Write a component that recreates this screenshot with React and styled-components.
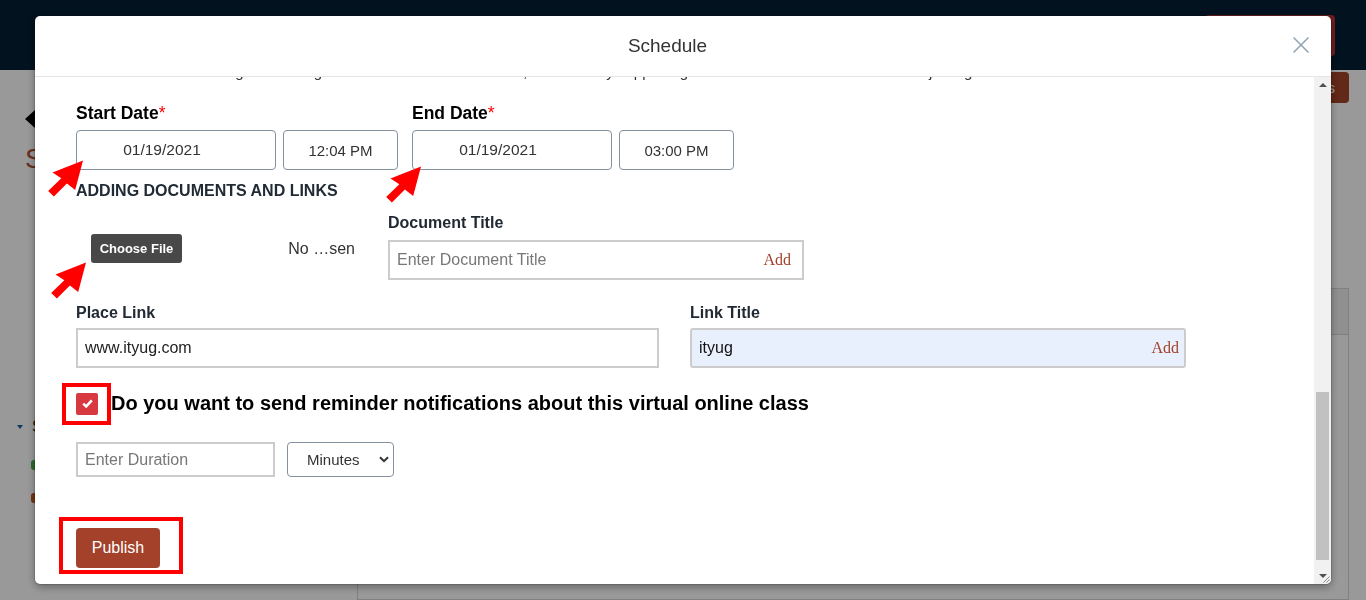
import React from "react";
import styled, { createGlobalStyle } from "styled-components";

const GlobalStyle = createGlobalStyle`
  * { box-sizing: border-box; }
  html, body { margin: 0; height: 100%; }
  body {
    font-family: "Liberation Sans", Arial, sans-serif;
    background: #fff;
    overflow: hidden;
  }
  input, button, select, textarea { font-family: inherit; }
`;

/* ---------- page behind the dialog ---------- */
const Page = styled.div`
  height: 600px;
  display: flex;
  flex-direction: column;
  background: #fff;
  color: #333;
`;
const TopBar = styled.header`
  height: 70px;
  flex-shrink: 0;
  background: #051e34;
  display: flex;
  align-items: center;
  justify-content: flex-end;
  padding-right: 31px;
`;
const TopButton = styled.button`
  width: 130px;
  height: 41px;
  border: 0;
  border-radius: 4px;
  background: #b83232;
  color: #fff;
  font-size: 15px;
`;
const Workspace = styled.div`
  flex: 1;
  display: flex;
  min-height: 0;
`;
const Sidebar = styled.aside`
  width: 358px;
  flex-shrink: 0;
  border-right: 1px solid #d6d6d6;
  padding: 40px 0 0 25px;
`;
const BackArrow = styled.span`
  display: block;
  width: 0;
  height: 0;
  border-top: 9px solid transparent;
  border-bottom: 9px solid transparent;
  border-right: 10px solid #000;
`;
const SideTitle = styled.h1`
  margin: 15px 0 0;
  font-size: 28px;
  line-height: 32px;
  font-weight: 400;
  color: #b34e39;
`;
const TreeHeader = styled.div`
  margin: 242px 0 0 -8px;
  display: flex;
  align-items: center;
  gap: 9px;
  font-size: 16px;
  line-height: 20px;
  color: #222;
`;
const Caret = styled.span`
  width: 0;
  height: 0;
  border-left: 3px solid transparent;
  border-right: 3px solid transparent;
  border-top: 4px solid #1b5fa3;
`;
const Legend = styled.ul`
  list-style: none;
  margin: 18px 0 0 6px;
  padding: 0;
  display: flex;
  flex-direction: column;
  gap: 13px;
`;
const LegendItem = styled.li`
  height: 20px;
  display: flex;
  align-items: center;
  gap: 8px;
  font-size: 14px;
`;
const Swatch = styled.span`
  width: 22px;
  height: 10px;
  border-radius: 3px;
  background: ${(p) => p.$color};
`;
const Main = styled.main`
  flex: 1;
  display: flex;
  flex-direction: column;
  padding: 2px 17px 0 0;
`;
const Toolbar = styled.div`
  display: flex;
  justify-content: flex-end;
`;
const ToolButton = styled.button`
  height: 31px;
  padding: 0 14px;
  border: 0;
  border-radius: 4px;
  background: #a34328;
  color: #fff;
  font-size: 15px;
`;
const Table = styled.div`
  margin-top: 185px;
  border: 1px solid #d5d5d5;
  border-left: 0;
  flex: 1;
`;
const TableHead = styled.div`
  height: 46px;
  background: #f0f0f0;
  border-bottom: 1px solid #d5d5d5;
`;

/* ---------- dialog ---------- */
const Backdrop = styled.div`
  position: fixed;
  inset: 0;
  background: rgba(0, 0, 0, 0.4);
  display: flex;
  align-items: center;
  justify-content: center;
`;
const Modal = styled.section`
  width: 1296px;
  height: 568px;
  background: #fff;
  border-radius: 5px;
  box-shadow: 0 0 0 1px rgba(0, 0, 0, 0.12), 0 3px 9px rgba(0, 0, 0, 0.35);
  display: flex;
  flex-direction: column;
  overflow: hidden;
`;
const ModalHeader = styled.header`
  height: 61px;
  flex-shrink: 0;
  border-bottom: 1px solid #e5e5e5;
  display: flex;
  align-items: center;
  padding: 0 15px;
`;
const ModalTitle = styled.h2`
  flex: 1;
  margin: 0;
  text-align: center;
  font-size: 19px;
  line-height: 24px;
  font-weight: 400;
  color: #333;
`;
const CloseButton = styled.button`
  width: 31px;
  height: 31px;
  margin-top: -2px;
  padding: 0;
  border: 0;
  background: none;
  display: flex;
  align-items: center;
  justify-content: center;
`;
const ModalMain = styled.div`
  flex: 1;
  min-height: 0;
  display: flex;
`;
/* the form is scrolled to its end: content sits at the bottom, the top is clipped */
const Scroller = styled.div`
  flex: 1;
  min-width: 0;
  display: flex;
  flex-direction: column;
  justify-content: flex-end;
  overflow: hidden;
  padding: 0 0 16px 41px;
`;
const FormContent = styled.div`
  flex-shrink: 0;
`;

/* scrollbar drawing */
const ScrollRail = styled.div`
  width: 17px;
  flex-shrink: 0;
  background: #f1f1f1;
  display: flex;
  flex-direction: column;
`;
const RailButton = styled.div`
  height: 17px;
  flex-shrink: 0;
  position: relative;
  display: flex;
  align-items: center;
  justify-content: center;
  &::before {
    content: "";
    width: 0;
    height: 0;
    border-left: 4px solid transparent;
    border-right: 4px solid transparent;
    ${(p) =>
      p.$dir === "up"
        ? "border-bottom: 4px solid #505050; margin-top: -1px;"
        : "border-top: 4px solid #505050; margin-top: 1px;"}
  }
`;
const RailTrack = styled.div`
  flex: 1;
  display: flex;
  flex-direction: column;
  justify-content: flex-end;
  padding: 0 2px 7px;
`;
const Thumb = styled.div`
  height: 168px;
  background: #c1c1c1;
`;
const Resizer = styled.svg`
  position: absolute;
  right: 1px;
  bottom: 1px;
`;

const Intro = styled.p`
  margin: 0;
  font-size: 15px;
  line-height: 22px;
  color: #333;
`;

const DateRow = styled.div`
  display: flex;
  margin-top: 20px;
`;
const DateGroup = styled.div`
  width: 336px;
  display: flex;
  flex-direction: column;
`;
const RequiredLabel = styled.label`
  font-size: 17.5px;
  line-height: 21px;
  font-weight: 700;
  color: #000;
`;
const Star = styled.span`
  color: #f00;
  font-weight: 400;
`;
const Pickers = styled.div`
  position: relative;
  display: flex;
  gap: 7px;
  margin-top: 6px;
`;
const PickerInput = styled.input`
  width: ${(p) => p.$w}px;
  height: 40px;
  border: 1px solid #8391a1;
  border-radius: 4px;
  padding: 0 ${(p) => p.$pr ?? 0}px 0 0;
  text-align: center;
  font-size: ${(p) => p.$fs ?? 15}px;
  color: #333;
  background: #fff;
  outline: 0;
`;

const SectionHeading = styled.h3`
  margin: 11px 0 0;
  font-size: 16px;
  line-height: 19px;
  font-weight: 700;
  color: #212b35;
  text-transform: uppercase;
`;

const Field = styled.div`
  display: flex;
  flex-direction: column;
  gap: ${(p) => p.$gap ?? 6}px;
  width: ${(p) => p.$w}px;
`;
const FieldLabel = styled.label`
  display: block;
  font-size: 16px;
  line-height: 19px;
  font-weight: 700;
  color: #212933;
`;
const TextInput = styled.input`
  width: ${(p) => p.$w}px;
  height: ${(p) => p.$h ?? 40}px;
  border: 2px solid #ccc;
  padding: 0 7px;
  font-size: 16px;
  color: #222;
  outline: 0;
  background: #fff;
  &::placeholder { color: #777; }
`;

const DocsRow = styled.div`
  display: flex;
  margin-top: 13px;
`;
const FileColumn = styled.div`
  width: 312px;
  padding: 21px 0 0 15px;
`;
const FilePicker = styled.div`
  position: relative;
  width: 264px;
  display: flex;
  align-items: center;
  justify-content: space-between;
`;
const ChooseButton = styled.button`
  width: 91px;
  height: 29px;
  padding: 0;
  border: 0;
  border-radius: 3px;
  background: #484848;
  color: #fff;
  font-size: 13px;
  font-weight: 700;
`;
const FileName = styled.span`
  font-size: 16px;
  color: #333;
`;

const InputShell = styled.div`
  width: ${(p) => p.$w}px;
  height: 40px;
  display: flex;
  align-items: center;
  border: 2px solid #ccc;
  border-radius: ${(p) => p.$radius ?? 0}px;
  background: ${(p) => p.$bg ?? "#fff"};
  padding: 0 ${(p) => p.$pr}px 0 7px;
`;
const ShellInput = styled.input`
  flex: 1;
  min-width: 0;
  border: 0;
  outline: 0;
  padding: 0;
  background: transparent;
  font-size: 16px;
  color: #111;
  &::placeholder { color: #777; }
`;
const AddButton = styled.button`
  border: 0;
  padding: 0;
  background: none;
  font-family: "Liberation Serif", "Times New Roman", serif;
  font-size: 16px;
  color: #a3412a;
`;

const LinksRow = styled.div`
  display: flex;
  gap: 31px;
  margin-top: 23px;
`;

const ReminderRow = styled.div`
  display: flex;
  align-items: center;
  gap: 13px;
  margin-top: 24px;
`;
const Highlight = styled.span`
  position: relative;
  display: inline-flex;
  &::after {
    content: "";
    position: absolute;
    top: ${(p) => p.$t}px;
    right: ${(p) => p.$r}px;
    bottom: ${(p) => p.$b}px;
    left: ${(p) => p.$l}px;
    border: 4px solid #f00;
    pointer-events: none;
  }
`;
const CheckBox = styled.span`
  width: 22px;
  height: 22px;
  border-radius: 2px;
  background: #d8383f;
  display: flex;
  align-items: center;
  justify-content: center;
`;
const ReminderText = styled.span`
  font-size: 20px;
  line-height: 23px;
  font-weight: 700;
  color: #000;
`;

const DurationRow = styled.div`
  display: flex;
  gap: 12px;
  margin-top: 27px;
`;
const SelectWrap = styled.div`
  position: relative;
  width: 107px;
  height: 35px;
`;
const UnitSelect = styled.select`
  appearance: none;
  width: 100%;
  height: 100%;
  border: 1px solid #8391a1;
  border-radius: 4px;
  padding: 0 0 0 19px;
  font-size: 15px;
  color: #333;
  background: #fff;
  outline: 0;
`;
const Chevron = styled.svg`
  position: absolute;
  right: 5px;
  top: 14px;
  pointer-events: none;
`;

const PublishRow = styled.div`
  margin-top: 51px;
  display: flex;
`;
const PublishButton = styled.button`
  width: 84px;
  height: 40px;
  border: 0;
  border-radius: 4px;
  background: #a3412a;
  color: #fff;
  font-size: 16px;
`;

const ArrowSvg = styled.svg`
  position: absolute;
  left: ${(p) => p.$x}px;
  top: ${(p) => p.$y}px;
  width: 40px;
  height: 40px;
  overflow: visible;
  pointer-events: none;
`;

function PointerArrow({ x, y }) {
  return (
    <ArrowSvg $x={x} $y={y} viewBox="0 0 40 40" aria-hidden="true">
      <polygon
        points="37,1.5 29.2,31 20.9,24.4 7.9,37.6 2.2,32.1 15.3,19.3 6.5,13.5"
        fill="#ff0000"
      />
    </ArrowSvg>
  );
}

export default function App() {
  return (
    <>
      <GlobalStyle />
      <Page>
        <TopBar>
          <TopButton>Logout</TopButton>
        </TopBar>
        <Workspace>
          <Sidebar>
            <BackArrow />
            <SideTitle>Schedule</SideTitle>
            <TreeHeader>
              <Caret />
              Subjects
            </TreeHeader>
            <Legend>
              <LegendItem>
                <Swatch $color="#4caf50" />
                Live
              </LegendItem>
              <LegendItem>
                <Swatch $color="#c0581f" />
                Upcoming
              </LegendItem>
            </Legend>
          </Sidebar>
          <Main>
            <Toolbar>
              <ToolButton>Add Sessions</ToolButton>
            </Toolbar>
            <Table>
              <TableHead />
            </Table>
          </Main>
        </Workspace>
      </Page>

      <Backdrop>
        <Modal>
          <ModalHeader>
            <ModalTitle>Schedule</ModalTitle>
            <CloseButton aria-label="Close">
              <svg width="16" height="16" viewBox="0 0 16 16">
                <path d="M0.5 0.5 L15.5 15.5 M15.5 0.5 L0.5 15.5" stroke="#8fa3b3" strokeWidth="1.5" />
              </svg>
            </CloseButton>
          </ModalHeader>

          <ModalMain>
            <Scroller>
              <FormContent>
                <Intro>
                  Please select the starting and ending time of the virtual online class, and add any
                  supporting documents or links for the students joining this class.
                </Intro>

                <DateRow>
                  <DateGroup>
                    <RequiredLabel>
                      Start Date<Star>*</Star>
                    </RequiredLabel>
                    <Pickers>
                      <PickerInput $w={200} $pr={28} $fs={15.5} defaultValue="01/19/2021" readOnly />
                      <PickerInput $w={115} defaultValue="12:04 PM" readOnly />
                      <PointerArrow x={-30} y={29} />
                    </Pickers>
                  </DateGroup>
                  <DateGroup>
                    <RequiredLabel>
                      End Date<Star>*</Star>
                    </RequiredLabel>
                    <Pickers>
                      <PickerInput $w={200} $pr={28} $fs={15.5} defaultValue="01/19/2021" readOnly />
                      <PickerInput $w={115} defaultValue="03:00 PM" readOnly />
                      <PointerArrow x={-28} y={35} />
                    </Pickers>
                  </DateGroup>
                </DateRow>

                <SectionHeading>Adding documents and links</SectionHeading>

                <DocsRow>
                  <FileColumn>
                    <FilePicker>
                      <ChooseButton>Choose File</ChooseButton>
                      <FileName>No …sen</FileName>
                      <PointerArrow x={-42} y={27} />
                    </FilePicker>
                  </FileColumn>
                  <Field $w={416} $gap={8}>
                    <FieldLabel>Document Title</FieldLabel>
                    <InputShell $w={416} $pr={11}>
                      <ShellInput placeholder="Enter Document Title" />
                      <AddButton>Add</AddButton>
                    </InputShell>
                  </Field>
                </DocsRow>

                <LinksRow>
                  <Field $w={583}>
                    <FieldLabel>Place Link</FieldLabel>
                    <TextInput $w={583} defaultValue="www.ityug.com" />
                  </Field>
                  <Field $w={496}>
                    <FieldLabel>Link Title</FieldLabel>
                    <InputShell $w={496} $pr={5} $radius={3} $bg="#e8f0fe">
                      <ShellInput defaultValue="ityug" />
                      <AddButton>Add</AddButton>
                    </InputShell>
                  </Field>
                </LinksRow>

                <ReminderRow>
                  <Highlight $t={-10} $r={-13} $b={-10} $l={-14}>
                    <CheckBox role="checkbox" aria-checked="true">
                      <svg width="11" height="9" viewBox="0 0 11 9">
                        <path d="M1.2 4.6 L4.2 7.4 L9.8 1.4" fill="none" stroke="#fff" strokeWidth="2.6" />
                      </svg>
                    </CheckBox>
                  </Highlight>
                  <ReminderText>
                    Do you want to send reminder notifications about this virtual online class
                  </ReminderText>
                </ReminderRow>

                <DurationRow>
                  <TextInput $w={199} $h={35} placeholder="Enter Duration" />
                  <SelectWrap>
                    <UnitSelect defaultValue="Minutes">
                      <option>Minutes</option>
                      <option>Hours</option>
                    </UnitSelect>
                    <Chevron width="10" height="7" viewBox="0 0 10 7">
                      <path d="M1 1.2 L5 5.2 L9 1.2" fill="none" stroke="#333" strokeWidth="2" />
                    </Chevron>
                  </SelectWrap>
                </DurationRow>

                <PublishRow>
                  <Highlight $t={-11} $r={-23} $b={-6} $l={-17}>
                    <PublishButton>Publish</PublishButton>
                  </Highlight>
                </PublishRow>
              </FormContent>
            </Scroller>

            <ScrollRail aria-hidden="true">
              <RailButton $dir="up" />
              <RailTrack>
                <Thumb />
              </RailTrack>
              <RailButton $dir="down">
                <Resizer width="8" height="8" viewBox="0 0 8 8">
                  <path d="M7.5 1.5 L1.5 7.5 M7.5 4.5 L4.5 7.5" stroke="#8a8a8a" strokeWidth="1" />
                </Resizer>
              </RailButton>
            </ScrollRail>
          </ModalMain>
        </Modal>
      </Backdrop>
    </>
  );
}
